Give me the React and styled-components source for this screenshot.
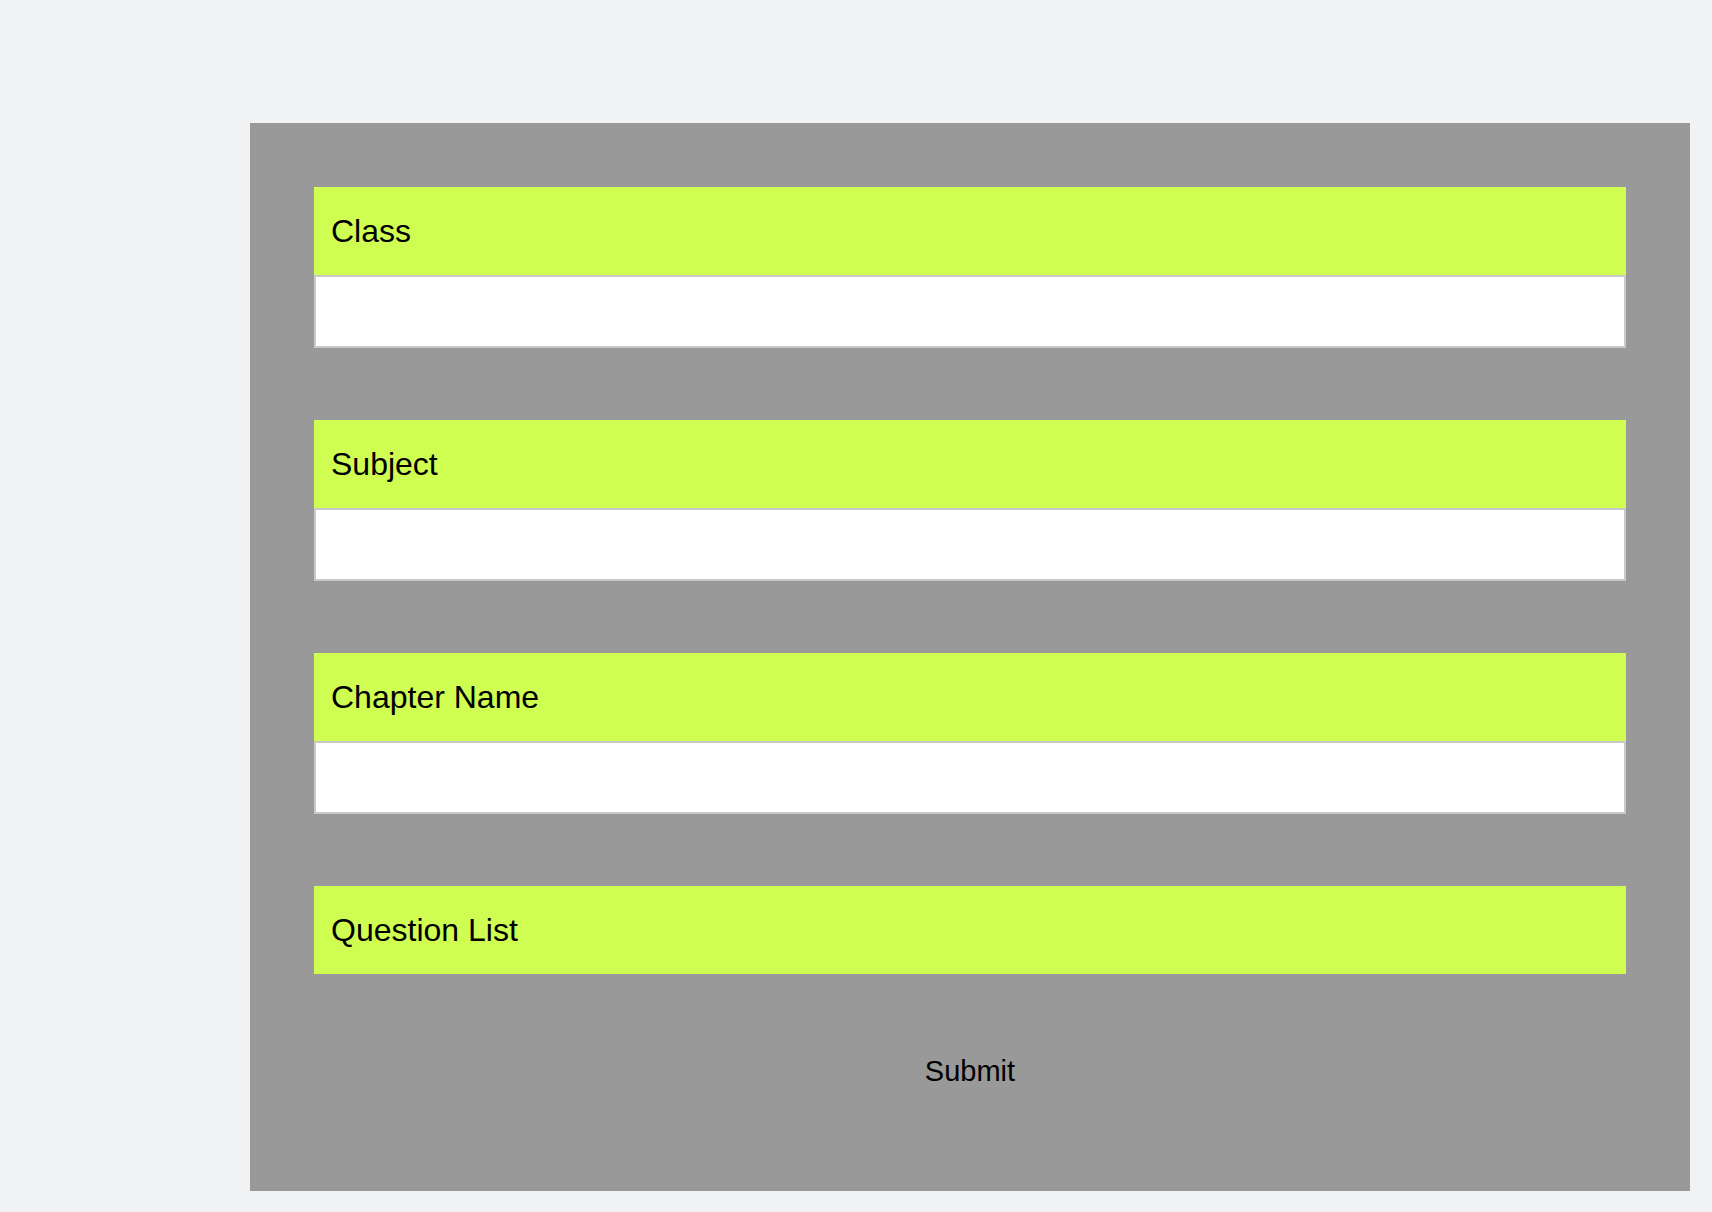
import styled, { createGlobalStyle } from 'styled-components';

const GlobalStyle = createGlobalStyle`
  * {
    box-sizing: border-box;
  }
  body {
    margin: 0;
    background: #f1f2f4;
    font-family: "Liberation Sans", Arial, sans-serif;
  }
`;

const Page = styled.div`
  min-height: 1212px;
  padding: 123px 22px 21px 250px;
`;

const Panel = styled.form`
  background: #999999;
  padding: 64px;
  display: flex;
  flex-direction: column;
`;

const Field = styled.div`
  display: flex;
  flex-direction: column;
  margin-bottom: ${(p) => (p.$last ? '0' : '72px')};
`;

const Label = styled.label`
  display: flex;
  align-items: center;
  height: 88px;
  padding: 0 17px;
  background: #cffd51;
  color: #000;
  font-size: 32px;
  line-height: 1;
`;

const Input = styled.input`
  height: 73px;
  width: 100%;
  border: 2px solid #c9c9c9;
  background: #fff;
  font-family: inherit;
  font-size: 28px;
  padding: 0 16px;
  outline: none;
`;

const SubmitRow = styled.div`
  display: flex;
  justify-content: center;
  margin-top: 80px;
  margin-bottom: 39px;
`;

const SubmitButton = styled.button`
  background: transparent;
  border: none;
  padding: 0;
  height: 34px;
  font-family: inherit;
  font-size: 29px;
  line-height: 34px;
  color: #000;
  cursor: pointer;
`;

const fields = ['Class', 'Subject', 'Chapter Name'];

function App() {
  return (
    <>
      <GlobalStyle />
      <Page>
        <Panel onSubmit={(e) => e.preventDefault()}>
          {fields.map((name) => (
            <Field key={name}>
              <Label>{name}</Label>
              <Input type="text" />
            </Field>
          ))}
          <Field $last>
            <Label>Question List</Label>
          </Field>
          <SubmitRow>
            <SubmitButton type="submit">Submit</SubmitButton>
          </SubmitRow>
        </Panel>
      </Page>
    </>
  );
}

export default App;
